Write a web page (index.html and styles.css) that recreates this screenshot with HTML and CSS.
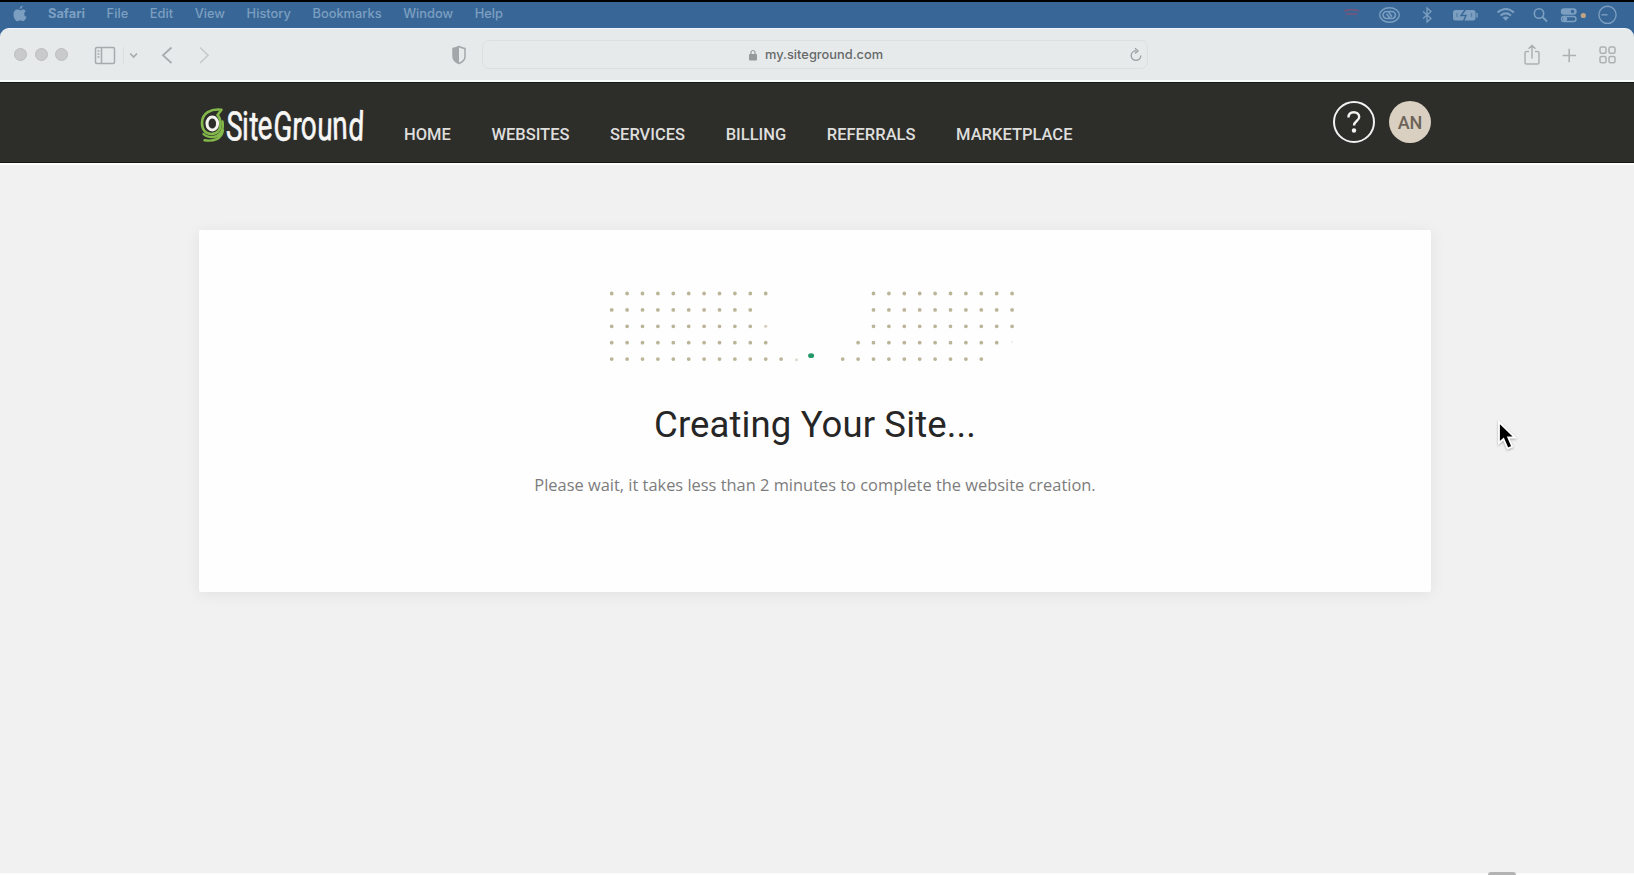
FILE: index.html
```html
<!DOCTYPE html>
<html lang="en">
<head>
<meta charset="utf-8">
<title>SiteGround</title>
<link rel="stylesheet" href="styles.css">
</head>
<body>
<div class="screen">
  <div class="menubar">
    <svg class="apple" width="14" height="18" viewBox="0 0 14 18"><path d="M9.6 0.5C9.6 2.4 8.3 4 6.8 4.1 6.6 2.4 8 .9 9.6.5ZM7 5.2C7.8 5.2 8.7 4.4 10 4.4c1.100 0 2.200.6 2.900 1.600-2.500 1.600-2 5.100.6 6.100-.7 2-2.100 4.100-3.500 4.100-1 0-1.500-.6-2.700-.6s-1.800.6-2.700.6C2.700 16.200.5 12.700.5 9.400c0-3 1.800-4.900 3.800-4.900 1.200 0 2 .7 2.700.7Z" fill="currentColor"/></svg>
    <nav class="menus"><b>Safari</b><span>File</span><span>Edit</span><span>View</span><span>History</span><span>Bookmarks</span><span>Window</span><span>Help</span></nav>
    <svg class="status" width="294" height="25" viewBox="1340 2 294 25" fill="none" stroke="currentColor" stroke-width="1.400">
      <g stroke="#7d5478" stroke-width="1.500"><path d="M1344 11q7-2.500 15 0M1346 14h11"/><path d="M1345 17v2m12-2v2" opacity=".4"/></g>
      <ellipse cx="1389.500" cy="15" rx="9.800" ry="7.300"/><path d="M1391 18.500h-4.500a3.500 3.500 0 1 1 3-5.300l2.500 3.500M1388 11.500h4a3.500 3.500 0 1 1-2.500 6l-3-3.500" stroke-width="1.600"/>
      <path d="m1423 11.500 8 7-4 3.500V8l4 3.500-8 7" stroke-width="1.300"/>
      <rect x="1453" y="10" width="22.500" height="10.500" rx="2.500" fill="currentColor" stroke="none"/><path d="M1477 13v4.500"/><path d="m1465.500 9.500-4.500 6h5l-2.500 5.500" stroke="#386797"/><path d="M1457 13v4M1471.500 13v4" stroke="#386797" opacity=".5"/>
      <path d="M1497.500 12.500q8.500-7 16.500 0M1500.500 15.500q5.300-4.200 10.500 0" stroke-width="2"/><path d="m1502.600 17.500 3.100 3.200 3.200-3.200q-3-2-6.300 0Z" fill="currentColor" stroke="none"/>
      <circle cx="1539" cy="13.500" r="4.700" stroke-width="1.600"/><path d="m1542.500 17 4.500 4.500" stroke-width="1.800"/>
      <rect x="1561.500" y="9" width="14.500" height="5" rx="2.500" fill="currentColor"/><rect x="1561.500" y="16.500" width="14.500" height="5" rx="2.500"/><circle cx="1572.500" cy="11.500" r="1.700" fill="#386797" stroke="none"/><circle cx="1565" cy="19" r="2.300" fill="currentColor" stroke="none"/>
      <circle cx="1583.300" cy="15.500" r="2.600" fill="#c0a284" stroke="none"/>
      <circle cx="1607.500" cy="14.800" r="8.600"/><path d="M1601.500 14.800h6"/>
    </svg>
  </div>

  <div class="toolbar">
    <div class="lights"><i></i><i></i><i></i></div>
    <svg class="tool-left" width="125" height="24" viewBox="93 42 125 24" fill="none" stroke="#a8abad" stroke-width="1.500">
      <rect x="95.500" y="46.500" width="19" height="16" rx="1.500"/><path d="M101.500 46.500v16M97.500 50h2m-2 3h2m-2 3h2"/>
      <path d="M123.500 46v17" stroke="#dcdfe0" stroke-width="1"/>
      <path d="m130.200 52.500 3.400 3.500 3.400-3.500" stroke-width="1.700"/>
      <path d="m171.500 46.500-8.500 7.800 8.500 7.700" stroke-width="1.800"/>
      <path d="m200 46.500 8 7.800-8 7.700" stroke="#c6c9ca" stroke-width="1.600"/>
    </svg>
    <svg class="shield" width="16" height="20" viewBox="0 0 16 20"><path d="M8 1.500Q11 3 14 3.500v8q0 4.500-6 7-6-2.500-6-7v-8Q5 3 8 1.500Z" fill="none" stroke="#a4a7a9" stroke-width="1.500"/><path d="M8 1.500v17q-6-2.500-6-7v-8Q5 3 8 1.500Z" fill="#a4a7a9"/></svg>
    <div class="address">
      <svg width="8" height="12" viewBox="0 0 8 12"><rect y="5" width="8" height="6.500" rx="1" fill="#969a9b"/><path d="M2 5.500V3.500a2 2 0 0 1 4 0v2" fill="none" stroke="#969a9b" stroke-width="1.200"/></svg>
      <span>my.siteground.com</span>
      <svg class="reload" width="14" height="16" viewBox="0 0 14 16" fill="none" stroke="#a0a3a5" stroke-width="1.400"><path d="M7 3.800a4.800 4.800 0 1 0 4.800 4.800M6 1.200l3 2.700-3 2.600"/></svg>
    </div>
    <svg class="tool-right" width="98" height="26" viewBox="1521 40 98 26" fill="none" stroke="#aeb1b2" stroke-width="1.500">
      <path d="M1529 50.500h-2.500q-1.500 0-1.500 1.500v9.500q0 1.500 1.500 1.500h11q1.500 0 1.500-1.500V52q0-1.500-1.500-1.500h-2.500M1532 57.500v-13m-3.500 3.200 3.500-3.400 3.500 3.400"/>
      <path d="M1562.500 54.500h13.500M1569.200 47.700v13.600" stroke-width="1.600"/>
      <rect x="1600" y="46" width="6" height="6.300" rx="1.500"/><rect x="1609" y="46" width="6" height="6.300" rx="1.500"/><rect x="1600" y="55.500" width="6" height="6.300" rx="1.500"/><rect x="1609" y="55.500" width="6" height="6.300" rx="1.500"/>
    </svg>
  </div>

  <header class="header">
    <svg class="logo" width="168" height="60" viewBox="198 94 168 60">
      <g fill="none" stroke="#83b84a" stroke-linecap="round" stroke-linejoin="round">
        <path d="M221.500 109.800C211 108.500 202 113 202 123c0 7 4 11 9.500 11 6 0 9-4.500 9-9.500 0-6.500-3-9.500-3-9.500l4-5.200" stroke-width="2.600"/>
        <path d="M222.500 121.500c1.800 8-2.500 15.500-10.500 15.500-3.500 0-6.500-1-8.500-3M204.500 140.200c9 1.500 17-1 18.500-10" stroke-width="2.400"/>
      </g>
      <ellipse cx="212.300" cy="123.500" rx="5.300" ry="6.600" fill="none" stroke="#f4f4ef" stroke-width="3"/>
      <text class="wordmark" transform="translate(225.500 139.500) scale(.69 1)" rotate="4 0 2 -3 4 2 -2 2 -2 3">SiteGround</text>
    </svg>
    <nav class="nav"><a>HOME</a><a>WEBSITES</a><a>SERVICES</a><a>BILLING</a><a>REFERRALS</a><a>MARKETPLACE</a></nav>
    <div class="help"><svg width="16" height="24" viewBox="0 0 16 24"><path d="M2.500 7.500C2.500 4 4.800 2.200 7.800 2.200s5.400 1.800 5.400 4.800c0 4-5.200 4.100-5.200 8.500" fill="none" stroke="#f2f2f2" stroke-width="2.400"/><circle cx="8" cy="20.500" r="2.200" fill="#f2f2f2"/></svg></div>
    <div class="avatar">AN</div>
  </header>

  <main class="page">
    <section class="card">
      <svg class="dots" width="410" height="76" viewBox="608 289 410 76">
        <g fill="none" stroke="#bcb498" stroke-width="3.800" stroke-linecap="round" stroke-dasharray="0 15.400">
          <path d="M611.700 293.500h154.100M873.500 293.500h138.700M611.700 309.900h138.700M873.500 309.900h138.700M611.700 326.300h138.700M873.500 326.300h138.700M611.700 342.700h154.100M858.100 342.700h138.700M611.700 359.100h169.500M842.700 359.100h138.700"/>
        </g>
        <circle cx="765.700" cy="326.300" r="1.600" fill="#d6d0bd"/><circle cx="796.500" cy="359.700" r="1.500" fill="#dedbd0"/><circle cx="1012" cy="342" r="1.200" fill="#f1efe9"/>
        <ellipse cx="811.100" cy="355.700" rx="3" ry="2.400" fill="#23986a"/>
      </svg>
      <h1>Creating Your Site...</h1>
      <p>Please wait, it takes less than 2 minutes to complete the website creation.</p>
    </section>
  </main>
  <svg class="cursor" width="24" height="34" viewBox="0 0 24 34"><path d="M3 2v21l4.500-4 4.200 9.500 4.500-2-4-9H19Z" fill="#000" stroke="#fff" stroke-width="1.800"/></svg>
  <div class="dock-tab"></div>
</div>
</body>
</html>
```

FILE: styles.css
```css
* { box-sizing: border-box; }
body { margin: 0; }
.screen {
  position: relative;
  display: flex;
  flex-direction: column;
  width: 1634px;
  height: 875px;
  overflow: hidden;
  background: #386797;
  border-top: 2px solid #000;
  font-family: Inter, "Liberation Sans", sans-serif;
}
.menubar {
  display: flex;
  align-items: center;
  height: 26px;
  padding: 0 0 2px 13px;
  color: #7c9fc1;
}
.apple { margin-top: -1px; }
.menus {
  display: flex;
  gap: 21.600px;
  margin-left: 21px;
  font-size: 12.850px;
  font-weight: 500;
  line-height: 24px;
}
.menus b { font-weight: 700; }
.status { margin-left: auto; }
.toolbar {
  display: flex;
  align-items: center;
  height: 54px;
  padding: 0 15px 0 14px;
  background: #e7eaeb;
  border-top: 1px solid #eef5fc;
  border-bottom: 2px solid #f8fafa;
  border-radius: 9px 9px 0 0;
}
.lights { display: flex; gap: 7.500px; width: 79px; }
.lights i {
  width: 13px;
  height: 13px;
  border: 1px solid #bbbebf;
  border-radius: 50%;
  background: #c8cacb;
}
.shield { margin-left: 233px; }
.address {
  display: flex;
  align-items: center;
  width: 666px;
  height: 29px;
  margin-left: 15px;
  padding: 0 4px 0 266px;
  border: 1.500px solid #dce0e1;
  border-radius: 7px;
  font-size: 12.850px;
  font-weight: 500;
  color: #66696a;
}
.address span { margin-left: 8px; }
.reload { margin-left: auto; }
.tool-right { margin: -2px 0 0 auto; }
.header {
  display: flex;
  height: 81px;
  padding-left: 198px;
  background: #2d2d2a;
  border-top: 1px solid #16191a;
  border-bottom: 1px solid #171714;
}
.logo { margin-top: 11px; }
.wordmark {
  font-family: Roboto, sans-serif;
  font-size: 40.500px;
  fill: #f7f7f5;
  stroke: #f7f7f5;
  stroke-width: .6px;
  stroke-linejoin: round;
}
.nav {
  display: flex;
  gap: 40.600px;
  margin: 42px 0 0 38px;
  font: 500 16.500px/20px Roboto, sans-serif;
  color: #dededc;
}
.help, .avatar {
  display: flex;
  align-items: center;
  justify-content: center;
  width: 42px;
  height: 42px;
  margin-top: 18px;
  border-radius: 50%;
}
.help { margin-left: auto; border: 2.500px solid #f2f2f2; }
.avatar {
  margin: 18px 203px 0 14px;
  background: #d9d0c2;
  color: #6c6458;
  font: 500 18px Roboto, sans-serif;
}
.page {
  flex: 1;
  padding: 65px 203px 0 199px;
  background: #f1f1f1;
  border-top: 2px solid #fff;
  border-bottom: 2px solid #fcfcfc;
}
.card {
  display: flex;
  flex-direction: column;
  align-items: center;
  height: 362px;
  padding-top: 59px;
  border-radius: 2px;
  background: #fefefe;
  box-shadow: 0 2px 16px rgba(0, 0, 0, .07);
}
.dots { margin-left: -4px; }
h1 {
  margin: 36px 0 0;
  font: 400 36.500px/48px Roboto, sans-serif;
  letter-spacing: .12px;
  color: #262626;
}
p {
  margin: 22px 0 0;
  font: 400 16.420px/28px "Open Sans", sans-serif;
  color: #7c7c7c;
}
.cursor { position: absolute; left: 1496px; top: 418px; filter: drop-shadow(0 1px 1px rgba(0, 0, 0, .3)); }
.dock-tab {
  position: absolute;
  left: 1488px;
  bottom: 0;
  width: 28px;
  height: 3px;
  border-radius: 3px 3px 0 0;
  background: #b3b3b3;
}
```
